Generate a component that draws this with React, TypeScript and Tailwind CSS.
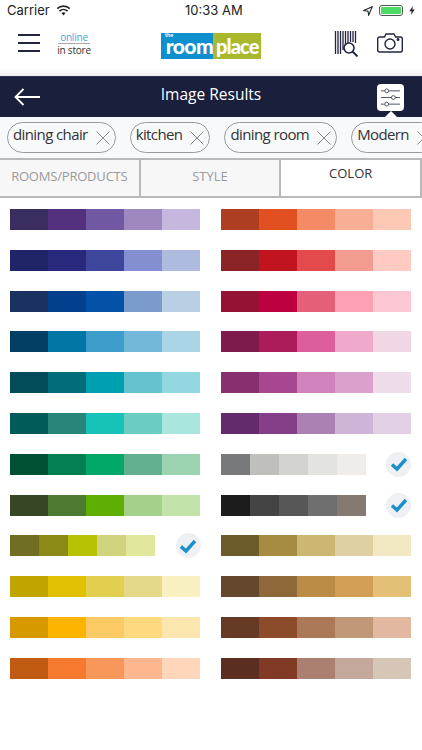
const font = 'font-["Open_Sans",sans-serif]';

const leftRows: { colors: string[]; checked?: boolean }[] = [
  { colors: ['#3a2d5f', '#54317f', '#7058a2', '#9f88c0', '#c6b7de'] },
  { colors: ['#1f2566', '#28297c', '#3f479d', '#838fd0', '#afbadf'] },
  { colors: ['#1b3261', '#023f8d', '#0351a8', '#7a9bcb', '#b9cfe4'] },
  { colors: ['#033f64', '#0276a4', '#3f9dcb', '#74b8d9', '#a9d5e6'] },
  { colors: ['#024b58', '#026c7a', '#00a0b1', '#67c2cf', '#93d8e0'] },
  { colors: ['#015b59', '#28857a', '#17c3b9', '#6bccc4', '#a8e6de'] },
  { colors: ['#015235', '#037f52', '#02a867', '#62b08f', '#9bd2b0'] },
  { colors: ['#364726', '#4c7a30', '#5eae04', '#a4d18a', '#c2e3aa'] },
  { colors: ['#6f6e24', '#8b8a16', '#b7c202', '#d0d47e', '#e0e89e'], checked: true },
  { colors: ['#c0a400', '#e0c000', '#e2cf50', '#e5d88a', '#f8f0c0'] },
  { colors: ['#d69a00', '#fdb400', '#fbca64', '#ffd97f', '#fbe6b0'] },
  { colors: ['#c15b14', '#f57a30', '#f7985a', '#fdb78e', '#ffd6ba'] },
];

const rightRows: { colors: string[]; checked?: boolean }[] = [
  { colors: ['#ae3e22', '#e15020', '#f58a66', '#f6ae94', '#fdc9b4'] },
  { colors: ['#8a2426', '#c1141f', '#e24a4c', '#f19b91', '#fecac2'] },
  { colors: ['#961235', '#bd0040', '#e46079', '#fea0b4', '#fdc8d4'] },
  { colors: ['#7f1a4d', '#ad1c5a', '#dd5e9c', '#efa9ca', '#f1d6e4'] },
  { colors: ['#873070', '#a7478f', '#d082bd', '#dba0cb', '#eedcea'] },
  { colors: ['#652a6b', '#843f88', '#ab80b2', '#ceb4d6', '#e1d0e5'] },
  { colors: ['#78797b', '#bfbfbc', '#d2d2ce', '#e3e3e0', '#f0ecea'], checked: true },
  { colors: ['#1c1c1c', '#444444', '#575757', '#6f6f6f', '#857a70'], checked: true },
  { colors: ['#6b5a2a', '#a68c42', '#cbb672', '#ded0a2', '#f2e8c2'] },
  { colors: ['#64472c', '#8f683a', '#ba8c48', '#d09e54', '#e3bf78'] },
  { colors: ['#663a24', '#8c4c2c', '#ab7858', '#c09878', '#e2b8a0'] },
  { colors: ['#5c2e22', '#803a26', '#ab8070', '#c4a89c', '#d6c6b8'] },
];

const chips = ['dining chair', 'kitchen', 'dining room', 'Modern'];

function CheckBadge() {
  return (
    <div className="w-[25px] h-[25px] rounded-full bg-[#eef0f3] flex items-center justify-center shrink-0">
      <svg viewBox="0 0 16 16" className="w-[16px] h-[16px]">
        <path d="M1 8.500 L6 13 L15 3" fill="none" stroke="#1b8fcb" strokeWidth="3.400" />
      </svg>
    </div>
  );
}

function SwatchRow({ colors, checked }: { colors: string[]; checked?: boolean }) {
  return (
    <div className="h-[21px] flex items-center justify-between">
      <div className={`flex h-[21px] ${checked ? 'w-[145px]' : 'w-[191px]'}`}>
        {colors.map((c) => (
          <div key={c} className="flex-1 h-full" style={{ backgroundColor: c }} />
        ))}
      </div>
      {checked && <CheckBadge />}
    </div>
  );
}

function BarcodeSearch() {
  return (
    <svg viewBox="0 0 26 26" className="w-[26px] h-[26px]">
      <g stroke="#23263f" strokeWidth="1.300">
        <path d="M1.500 0v23M4 0v23M6.500 0v23M9 0v19M11.500 0v14M14 0v12M16.500 0v11M19 0v11M21.500 0v12" />
      </g>
      <circle cx="15" cy="17" r="5" fill="#fff" stroke="#1e2140" strokeWidth="1.600" />
      <path d="M18.500 20.500 L23.500 25.500" stroke="#1e2140" strokeWidth="1.800" />
    </svg>
  );
}

function Camera() {
  return (
    <svg viewBox="0 0 26 20" className="w-[26px] h-[20px]" fill="none" stroke="#23263f" strokeWidth="1.400">
      <path d="M2.500 4h5l1.500-3h8l1.500 3h5a1.800 1.800 0 0 1 1.800 1.800v11.400a1.800 1.800 0 0 1-1.800 1.800h-21a1.800 1.800 0 0 1-1.800-1.800V5.800a1.800 1.800 0 0 1 1.800-1.800z" />
      <circle cx="13" cy="11" r="5" />
      <circle cx="21" cy="6.500" r="0.800" fill="#23263f" />
    </svg>
  );
}

function FilterIcon() {
  return (
    <div className="relative w-[27px] h-[27px] rounded-[4px] bg-white flex items-center justify-center">
      <svg viewBox="0 0 22 20" className="w-[21px] h-[19px]" fill="none" stroke="#4a4d60" strokeWidth="1">
        <path d="M1 3h4M9 3h12M1 10h11M16 10h5M1 17h4M9 17h12" />
        <circle cx="7" cy="3" r="2" />
        <circle cx="14" cy="10" r="2" />
        <circle cx="7" cy="17" r="2" />
      </svg>
      <div className="absolute top-[27px] left-1/2 -translate-x-1/2 w-0 h-0 border-l-[6px] border-r-[6px] border-b-[6px] border-l-transparent border-r-transparent border-b-white" />
    </div>
  );
}

export default function App() {
  return (
    <div className={`w-[422px] h-[750px] bg-white overflow-hidden ${font}`}>
      {/* status bar */}
      <div className="h-[21px] px-[7px] flex items-center justify-between text-[13px] text-[#222] font-['Inter',sans-serif] relative">
        <div className="flex items-center gap-[6px]">
          <span>Carrier</span>
          <svg viewBox="0 0 16 12" className="w-[15px] h-[11px]">
            <path d="M8 11.500 L5.800 8.800a3.300 3.300 0 0 1 4.400 0z" fill="#222" />
            <path d="M3.600 6.600a6.500 6.500 0 0 1 8.800 0M1.200 3.900a10 10 0 0 1 13.600 0" fill="none" stroke="#222" strokeWidth="1.800" />
          </svg>
        </div>
        <span className="absolute left-[185px]">10:33 AM</span>
        <div className="flex items-center gap-[6px]">
          <svg viewBox="0 0 12 12" className="w-[10px] h-[10px]">
            <path d="M11 1 L1 5.500 L6 6.200 L6.800 11z" fill="none" stroke="#222" strokeWidth="1.300" />
          </svg>
          <div className="w-[24px] h-[11px] rounded-[3px] border border-[#555] p-[1px]">
            <div className="w-full h-full rounded-[1px] bg-[#4cd964]" />
          </div>
          <svg viewBox="0 0 8 12" className="w-[6px] h-[11px]">
            <path d="M5 0 L0.500 7 H3.500 L2.800 12 L7.500 4.800 H4.500z" fill="#222" />
          </svg>
        </div>
      </div>

      {/* header */}
      <div className="h-[55px] flex items-start relative bg-gradient-to-b from-white from-[85%] to-[#eeeeee]">
        <div className="ml-[18px] mt-[13px] w-[22px] flex flex-col gap-[6px] shrink-0">
          <div className="h-[2px] bg-[#23263f]" />
          <div className="h-[2px] bg-[#23263f]" />
          <div className="h-[2px] bg-[#23263f]" />
        </div>
        <div className="ml-[18px] mt-[10px] w-[32px] shrink-0 flex flex-col items-center text-[10px] leading-[12px] whitespace-nowrap tracking-[-0.2px]">
          <span className="text-[#3aa6dd]">online</span>
          <div className="w-full h-px bg-[#aaa]" />
          <span className="text-[#333]">in store</span>
        </div>
        <div className="ml-[71px] mt-[12px] flex h-[26px] text-white font-black font-['Lato',sans-serif] relative">
          <div className="w-[52px] bg-[#0e8fce] flex justify-end">
            <span className="mt-[5px] text-[21px] leading-[16px] tracking-[-0.6px]">room</span>
          </div>
          <div className="w-[48px] bg-[#aab82d]">
            <span className="block mt-[5px] pl-[3px] text-[20px] leading-[16px] tracking-[-0.9px]">place</span>
          </div>
          <span className="absolute left-[4px] top-0 text-[5.500px] leading-[5px] font-bold">the</span>
        </div>
        <div className="absolute left-[334px] top-[10px]">
          <BarcodeSearch />
        </div>
        <div className="absolute left-[377px] top-[12px]">
          <Camera />
        </div>
      </div>

      {/* title bar */}
      <div className="h-[41px] bg-[#1a1f3c] flex items-center justify-between pl-[14px] pr-[18px] relative border-t border-[#2f3350]">
        <svg viewBox="0 0 26 18" className="w-[26px] h-[18px]" fill="none" stroke="#fff" strokeWidth="1.800">
          <path d="M26 9H1.500M9.500 1 L1.500 9 L9.500 17" />
        </svg>
        <span className="absolute left-0 right-0 -mt-[4px] text-center text-white text-[15.500px] pointer-events-none">Image Results</span>
        <FilterIcon />
      </div>

      {/* active filters */}
      <div className="h-[41px] bg-[#f8f9fb] flex items-center gap-[14px] pl-[7px] overflow-hidden">
        {chips.map((chip) => (
          <div
            key={chip}
            className="h-[31px] shrink-0 rounded-full border border-[#9a9a9a] pl-[5px] pr-[5px] flex items-center gap-[8px] text-[15px] tracking-[-0.6px] text-[#333]"
          >
            <span className="-mt-[7px]">{chip}</span>
            <svg viewBox="0 0 14 14" className="w-[14px] h-[14px]" stroke="#8a8a8a" strokeWidth="1">
              <path d="M0.500 0.500 L13.500 13.500M13.500 0.500 L0.500 13.500" />
            </svg>
          </div>
        ))}
      </div>

      {/* tabs */}
      <div className="h-[40px] grid grid-cols-3 text-[13px]">
        <div className="bg-[#f7f7f7] border-2 border-l-0 border-[#b9b9b9] flex items-center justify-center text-[#9a9a9a] tracking-[-0.2px] pb-[3px]">
          ROOMS/PRODUCTS
        </div>
        <div className="bg-[#f7f7f7] border-2 border-l-0 border-[#b9b9b9] flex items-center justify-center text-[#9a9a9a] pb-[3px]">
          STYLE
        </div>
        <div className="bg-white border-2 border-l-0 border-[#b9b9b9] flex items-center justify-center text-[#333] pb-[9px]">
          COLOR
        </div>
      </div>

      {/* color swatches */}
      <div className="grid grid-cols-2 gap-x-[20px] pt-[11px] px-[10px] w-[421px]">
        <div className="flex flex-col gap-[19.800px]">
          {leftRows.map((row) => (
            <SwatchRow key={row.colors[0]} colors={row.colors} checked={row.checked} />
          ))}
        </div>
        <div className="flex flex-col gap-[19.800px]">
          {rightRows.map((row) => (
            <SwatchRow key={row.colors[0]} colors={row.colors} checked={row.checked} />
          ))}
        </div>
      </div>
    </div>
  );
}
